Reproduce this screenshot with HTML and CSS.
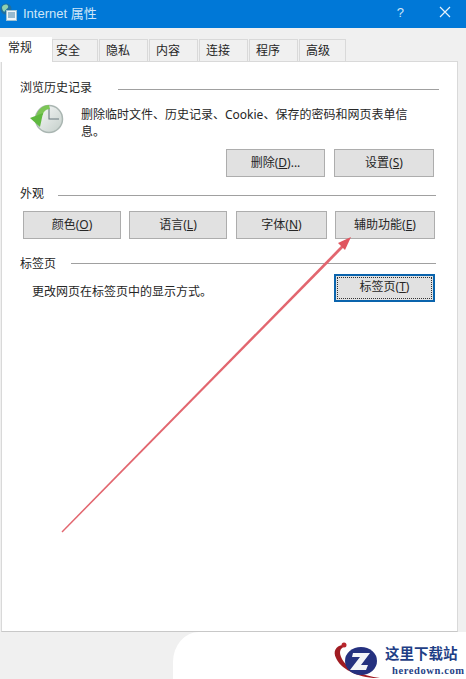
FILE: index.html
```html
<!DOCTYPE html>
<html lang="zh-CN">
<head>
  <meta charset="UTF-8" />
  <meta name="viewport" content="width=device-width, initial-scale=1.0" />
  <title>Internet 属性</title>
  <link rel="stylesheet" href="styles.css">
</head>
<body>

  <div class="titlebar">
    <svg class="app-icon" width="18" height="18" viewBox="0 0 18 18">
      <circle cx="6" cy="6" r="5.500" fill="#1f6f9f"/>
      <path d="M2 4c2-3 5-3 6-1s-2 3-3 5-3-1-3-4z" fill="#8fd0b0"/>
      <rect x="6.500" y="7.500" width="10" height="10" fill="#eef4f8" stroke="#9cc0d2"/>
      <path d="M8 10h7M8 12h7M8 14h7" stroke="#3f7fa5"/>
    </svg>
    <span class="title">Internet 属性</span>
    <span class="help">?</span>
    <svg class="close" width="12" height="12" viewBox="0 0 12 12">
      <path d="M1 1l10 10M11 1L1 11" stroke="#e6f2fb" stroke-width="1.2" fill="none"/>
    </svg>
  </div>

  <div class="tabs">
    <div class="tab active">常规</div>
    <div class="tab first">安全</div>
    <div class="tab">隐私</div>
    <div class="tab">内容</div>
    <div class="tab">连接</div>
    <div class="tab">程序</div>
    <div class="tab last">高级</div>
  </div>

  <div class="panel">
    <div class="group-head history">
      <span>浏览历史记录</span>
      <i class="rule"></i>
    </div>
    <div class="history-body">
      <svg class="clock" width="36" height="30" viewBox="0 0 36 30">
        <defs>
          <linearGradient id="face" x1="0" y1="0" x2="1" y2="1">
            <stop offset="0" stop-color="#fafbfb"/>
            <stop offset="1" stop-color="#c3cec9"/>
          </linearGradient>
        </defs>
        <circle cx="21" cy="15" r="13.500" fill="url(#face)" stroke="#aab6b2" stroke-width="1.500"/>
        <path d="M21 5v10h10" stroke="#69787e" stroke-width="1.100" fill="none"/>
        <path d="M8 12C10 5 15 1 21 1l1 4c-4 0-7 3-7 6z" fill="#7cc656"/>
        <path d="M2 14l13-5-3 14z" fill="#5fb83f"/>
      </svg>
      <p>删除临时文件、历史记录、Cookie、保存的密码和网页表单信息。</p>
    </div>
    <div class="row row-history">
      <button class="btn w99">删除(<u>D</u>)...</button>
      <button class="btn w100">设置(<u>S</u>)</button>
    </div>

    <div class="group-head looks">
      <span>外观</span>
      <i class="rule"></i>
    </div>
    <div class="row row-looks">
      <button class="btn w98">颜色(<u>O</u>)</button>
      <button class="btn w98">语言(<u>L</u>)</button>
      <button class="btn w91">字体(<u>N</u>)</button>
      <button class="btn w100">辅助功能(<u>E</u>)</button>
    </div>

    <div class="group-head tabs-head">
      <span>标签页</span>
      <i class="rule"></i>
    </div>
    <div class="tabs-body">
      <p>更改网页在标签页中的显示方式。</p>
      <button class="btn w101 focused"><span>标签页(<u>T</u>)</span></button>
    </div>
  </div>

  <!-- arrow drawn on top of the dialog -->
  <svg class="arrow" width="466" height="679" viewBox="0 0 466 679">
    <path d="M61.500 531.500L342.400 244.600l2 2L62.500 532.500z" fill="#e2666f"/>
    <path d="M351 237L338 243l7 7z" fill="#e0555f"/>
  </svg>

  <div class="watermark">
    <svg class="logo" width="50" height="42" viewBox="0 0 50 42">
      <path d="M10 8C2 9 0 15 3 21c4 10 22 21 44 20-17-2-33-9-38-19-3-6-3-10 3-13z" fill="#a01c22"/>
      <circle cx="11" cy="8" r="2.500" fill="#b8262c"/>
      <ellipse cx="28" cy="24" rx="16" ry="14" fill="#25317f"/>
      <path d="M20 16h17l-9 12h7l-2 5H17l10-13h-8z" fill="#f4f4f8"/>
    </svg>
    <div class="brand">
      <div class="brand-cn">这里下载站</div>
      <div class="brand-en">heredown.com</div>
    </div>
  </div>

</body>
</html>
```

FILE: styles.css
```css
html, body {
  margin: 0;
  height: 679px;
  overflow: hidden;
}

body {
  position: relative;
  background-color: #f0f0f0;
  font-family: "Noto Sans", "Noto Sans CJK SC", sans-serif;
  font-size: 12px;
  color: #262626;
}

p {
  margin: 0;
}

.titlebar {
  box-sizing: border-box;
  height: 28px;
  padding-bottom: 4px;
  background-color: #0078d7;
  display: flex;
  align-items: center;
  color: #cfe6f8;
}

.app-icon {
  margin-left: 0;
}

.title {
  margin-left: 5px;
  font-family: "Liberation Sans", "Noto Sans CJK SC", sans-serif;
  font-size: 13px;
  flex: 1;
}

.help {
  font-family: "Liberation Sans", sans-serif;
  font-size: 13px;
  margin-right: 35px;
}

.close {
  margin-right: 15px;
}

.tabs {
  display: flex;
  padding-top: 11px;
  height: 22px;
  align-items: flex-end;
}

.tab {
  width: 41px;
  height: 21px;
  padding-left: 6px;
  margin-left: 1px;
  border: 1px solid #d9d9d9;
  border-bottom: 0;
  line-height: 22px;
}

.tab.first {
  width: 41px;
  padding-left: 3px;
  margin-left: 0;
}

.tab.last {
  width: 39px;
}

.tab.active {
  width: 44px;
  height: 25px;
  padding-left: 8px;
  margin: 0 0 -1px;
  background-color: #fff;
  border: 0;
  line-height: 22px;
  position: relative;
  z-index: 1;
}

.panel {
  box-sizing: border-box;
  width: 457px;
  height: 571px;
  margin-left: 1px;
  padding-top: 17px;
  background-color: #fff;
  border: 1px solid #d9d9d9;
  border-bottom-color: #c8c8c8;
}

.group-head {
  display: flex;
  align-items: center;
  height: 16px;
  padding-left: 18px;
}

.group-head .rule {
  display: block;
  height: 1px;
  margin-top: 4px;
  background-color: #a0a0a0;
}

.history .rule {
  margin-left: 26px;
  width: 321px;
}

.looks .rule {
  margin-left: 14px;
  width: 378px;
}

.tabs-head .rule {
  margin-top: 1px;
  margin-left: 15px;
  width: 365px;
}

.history-body {
  display: flex;
  margin-top: 9px;
  height: 45px;
  padding-left: 26px;
}

.clock {
  flex: none;
}

.history-body p {
  width: 342px;
  margin: 2px 0 0 17px;
  line-height: 17px;
}

.row {
  display: flex;
}

.row-history {
  padding-left: 224px;
  gap: 9px;
}

.looks {
  margin-top: 8px;
}

.row-looks {
  margin-top: 10px;
  padding-left: 21px;
  gap: 8px;
}

.btn {
  box-sizing: border-box;
  height: 28px;
  padding: 0 0 2px;
  background-color: #e1e1e1;
  border: 1px solid #adadad;
  font-family: inherit;
  font-size: 12px;
  color: #262626;
}

.w91 { width: 91px; margin-left: 1px; }
.w98 { width: 98px; }
.w99 { width: 99px; }
.w100 { width: 100px; }
.w101 { width: 101px; }

.tabs-head {
  margin-top: 16px;
}

.tabs-body {
  display: flex;
  align-items: center;
  justify-content: space-between;
  padding: 3px 22px 0 30px;
}

.tabs-body p {
  margin-top: 6px;
}

.focused {
  border: 2px solid #0a64ad;
  padding: 1px;
}

.focused span {
  display: block;
  height: 20px;
  line-height: 18px;
  border: 1px dotted #333;
}

.arrow {
  position: absolute;
  left: 0;
  top: 0;
  pointer-events: none;
}

.watermark {
  position: absolute;
  left: 173px;
  right: 0;
  top: 632px;
  bottom: 0;
  background-color: #fff;
  border-top-left-radius: 26px 30px;
}

.logo {
  position: absolute;
  left: 160px;
  top: 5px;
}

.brand {
  position: absolute;
  left: 212px;
  top: 13px;
  font-family: "Liberation Serif", "Noto Sans CJK SC", serif;
  font-weight: bold;
  color: #1f3f86;
}

.brand-cn {
  font-size: 14.500px;
  line-height: 18px;
  white-space: nowrap;
}

.brand-en {
  margin: 1px 0 0 7px;
  font-size: 10.500px;
  line-height: 13px;
  letter-spacing: 0.600px;
  white-space: nowrap;
}
```
